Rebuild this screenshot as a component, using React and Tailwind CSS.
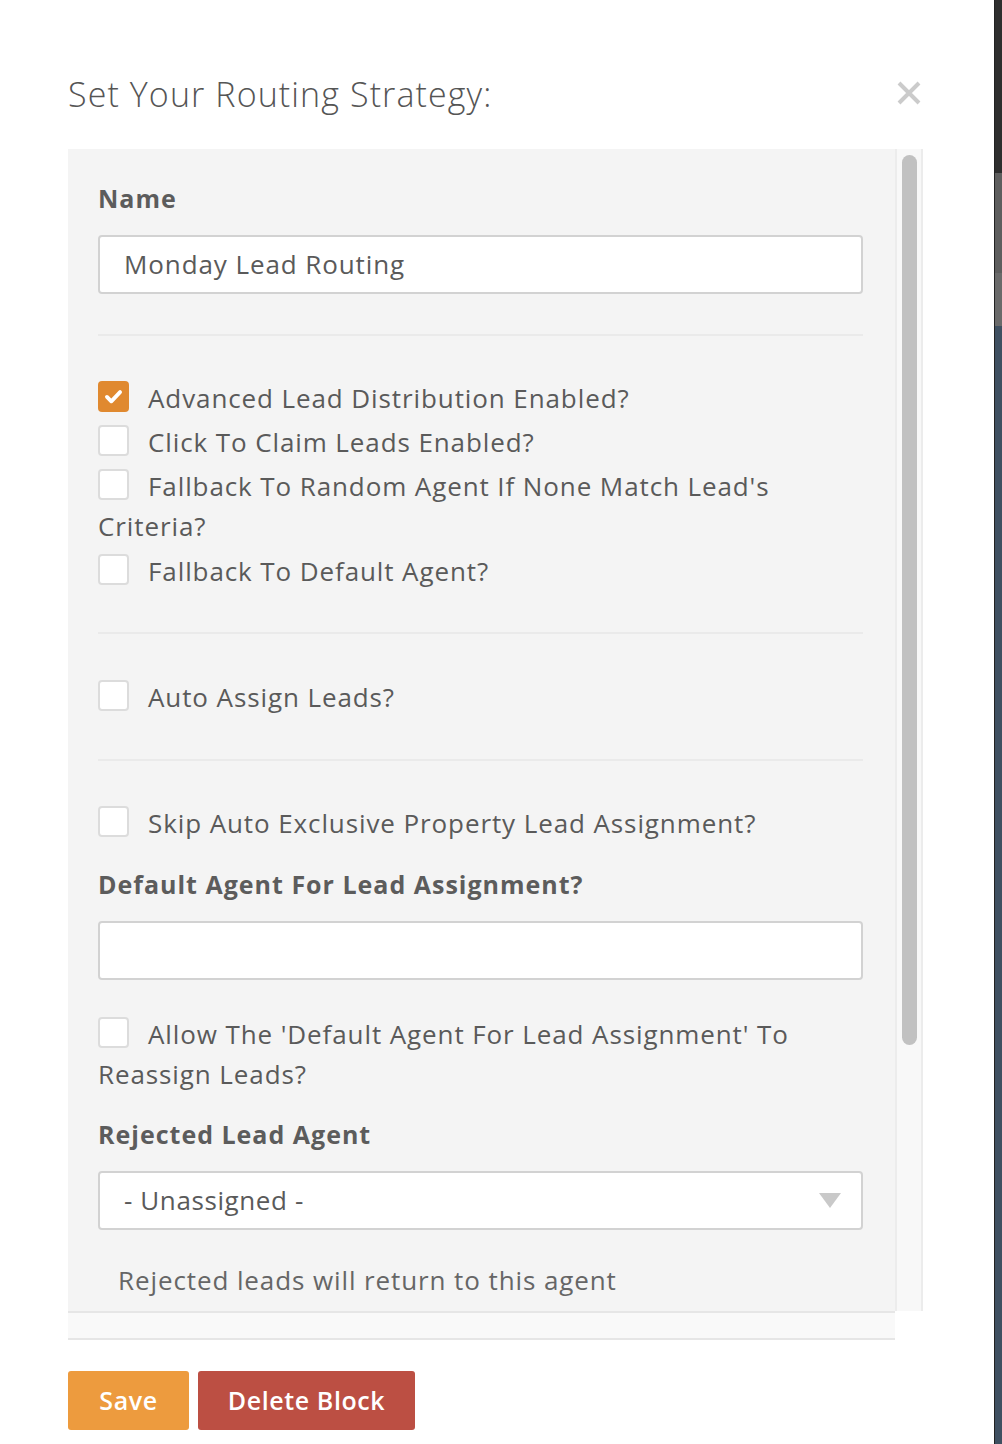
import React from 'react';

const font = { fontFamily: '"Open Sans", "Liberation Sans", sans-serif' };

const Check = ({ checked }) => (
  <span
    className={`relative inline-block w-[31px] h-[31px] mr-[19px] align-[-4px] rounded-[4px] ${
      checked ? 'bg-[#e0892f]' : 'bg-white border-2 border-[#dcdcdc]'
    }`}
  >
    {checked && (
      <svg viewBox="0 0 24 24" className="absolute left-[5px] top-[5px] w-[21px] h-[21px]" fill="none" stroke="white" strokeWidth="4.4" strokeLinecap="round" strokeLinejoin="round">
        <path d="M4.5 12.5l5 5L19.5 7" />
      </svg>
    )}
  </span>
);

const Row = ({ checked, children, className = '' }) => (
  <div className={`text-[26px] leading-[40px] text-[#5a5a5a] tracking-[0.9px] ${className}`}>
    <Check checked={checked} />
    {children}
  </div>
);

const Label = ({ children, className = '' }) => (
  <div className={`text-[25px] leading-[30px] font-bold text-[#5c5c5c] tracking-[1px] ${className}`}>{children}</div>
);

const Divider = ({ className = '' }) => <div className={`h-[2px] bg-[#eaeaea] ${className}`} />;

export default function App() {
  return (
    <div className="w-[1002px] h-[1444px] bg-white flex overflow-hidden" style={font}>
      <div className="w-[994px] pl-[68px] pt-[74px]">
        {/* Header */}
        <div className="w-[855px] flex items-center justify-between h-[40px]">
          <h2 className="text-[34px] font-light text-[#555] tracking-[1.1px]">Set Your Routing Strategy:</h2>
          <svg viewBox="0 0 24 24" className="w-[24px] h-[24px] mr-[2px] mt-[-2px]" stroke="#cbcbcb" strokeWidth="4" strokeLinecap="butt">
            <path d="M2 2L22 22M22 2L2 22" />
          </svg>
        </div>

        {/* Scroll panel */}
        <div className="mt-[35px] w-[855px] h-[1162px] flex">
          <div className="w-[827px] h-full bg-[#f4f4f4] overflow-hidden pl-[30px] pr-[32px] pt-[34px]">
            <Label>Name</Label>
            <div className="mt-[22px] h-[59px] bg-white border-2 border-[#d2d2d2] rounded-[4px] flex items-center pl-[24px] text-[26px] text-[#5a5a5a] tracking-[0.9px]">
              Monday Lead Routing
            </div>
            <Divider className="mt-[40px]" />

            <Row checked className="mt-[42px]">Advanced Lead Distribution Enabled?</Row>
            <Row className="mt-[4px]">Click To Claim Leads Enabled?</Row>
            <Row className="mt-[4px]">Fallback To Random Agent If None Match Lead's Criteria?</Row>
            <Row className="mt-[5px]">Fallback To Default Agent?</Row>

            <Divider className="mt-[41px]" />
            <Row className="mt-[43px]">Auto Assign Leads?</Row>
            <Divider className="mt-[42px]" />
            <Row className="mt-[42px]">Skip Auto Exclusive Property Lead Assignment?</Row>

            <Label className="mt-[26px]">Default Agent For Lead Assignment?</Label>
            <div className="mt-[22px] h-[59px] bg-white border-2 border-[#d2d2d2] rounded-[4px]" />

            <Row className="mt-[34px]">Allow The 'Default Agent For Lead Assignment' To Reassign Leads?</Row>

            <Label className="mt-[25px]">Rejected Lead Agent</Label>
            <div className="mt-[22px] h-[59px] bg-white border-2 border-[#d2d2d2] rounded-[4px] flex items-center justify-between pl-[24px] pr-[20px] text-[26px] text-[#5a5a5a] tracking-[0.6px]">
              <span>- Unassigned -</span>
              <svg viewBox="0 0 22 15" className="w-[22px] h-[15px]">
                <path d="M0 0h22L11 15z" fill="#c9c9c9" />
              </svg>
            </div>
            <div className="mt-[30px] pl-[20px] text-[26px] leading-[40px] text-[#666] tracking-[0.9px]">
              Rejected leads will return to this agent
            </div>
          </div>

          {/* Scrollbar */}
          <div className="w-[28px] h-full bg-[#f8f8f8] border-l-2 border-r-2 border-[#ececec] pt-[6px] flex justify-center">
            <div className="w-[15px] h-[890px] rounded-full bg-[#c1c1c1]" />
          </div>
        </div>

        {/* Footer band */}
        <div className="w-[827px] h-[29px] bg-[#f9f9f9] border-t-2 border-b-2 border-[#e6e6e6]" />

        {/* Buttons */}
        <div className="mt-[31px] flex gap-[9px]">
          <button className="w-[121px] h-[59px] rounded-[3px] bg-[#ed9b3e] text-white text-[25px] font-semibold tracking-[0.6px]">Save</button>
          <button className="w-[217px] h-[59px] rounded-[3px] bg-[#bc4f43] text-white text-[25px] font-semibold tracking-[0.6px]">Delete Block</button>
        </div>
      </div>

      {/* Right edge strip */}
      <div className="w-[8px] h-full flex flex-col border-l border-[#222]">
        <div className="h-[173px] bg-[#2e2e2e]" />
        <div className="h-[100px] bg-[#5e5e5e]" />
        <div className="h-[53px] bg-[#6a6a6a]" />
        <div className="flex-1 bg-[#3f5061]" />
      </div>
    </div>
  );
}
